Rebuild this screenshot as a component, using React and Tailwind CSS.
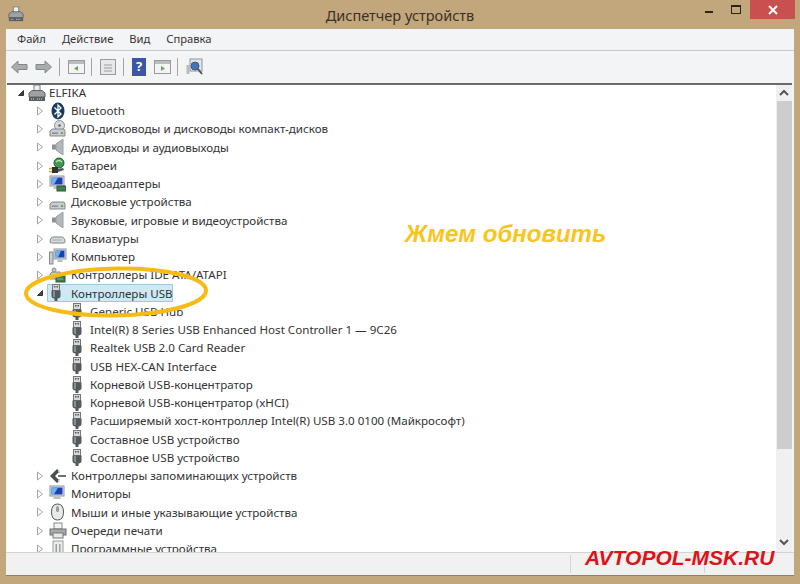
import React from 'react';

const Expander = ({ open }) => (
  <svg width="10" height="10" viewBox="0 0 10 10" className="shrink-0">
    {open ? (
      <path d="M7.5 2.5 V7.5 H2.5 Z" fill="#444" stroke="#333" />
    ) : (
      <path d="M2.5 1 L7.5 5 L2.5 9 Z" fill="#fff" stroke="#a6a6a6" />
    )}
  </svg>
);

const Usb = () => (
  <svg width="16" height="18" viewBox="0 0 16 18" className="shrink-0">
    <rect x="4.5" y="0.5" width="7" height="6" fill="#d8d8d8" stroke="#777" />
    <rect x="6" y="2" width="1.5" height="1.5" fill="#555" />
    <rect x="8.5" y="2" width="1.5" height="1.5" fill="#555" />
    <path d="M3.5 6.5 H12.5 V12 Q12.5 14 9.5 14.5 V17 H6.5 V14.5 Q3.5 14 3.5 12 Z" fill="#55585c" />
    <rect x="5" y="7" width="2" height="6" fill="#8b8e92" />
  </svg>
);

const Bluetooth = () => (
  <svg width="16" height="18" viewBox="0 0 16 18">
    <ellipse cx="8" cy="9" rx="6.5" ry="8.5" fill="#1a3a5e" />
    <path d="M4.5 5.5 L11 12 L8 15 V3 L11 6 L4.5 12.5" fill="none" stroke="#fff" strokeWidth="1.3" />
  </svg>
);

const Drive = ({ disc }) => (
  <svg width="17" height="18" viewBox="0 0 17 18">
    {disc && <circle cx="10.5" cy="5.5" r="5" fill="#d6d9dc" stroke="#8a8f94" />}
    {disc && <circle cx="10.5" cy="5.5" r="1.3" fill="#666" />}
    <path d="M1 11 L3 9 H15 L16 11 V16 H1 Z" fill="#c9ccce" stroke="#84888c" />
    <rect x="3" y="12.5" width="6" height="1.5" fill="#8a8d90" />
    <rect x="12" y="12" width="2" height="2" fill="#6aa84f" />
  </svg>
);

const Speaker = () => (
  <svg width="16" height="18" viewBox="0 0 16 18">
    <path d="M2 6.5 H6 V11.5 H2 Z" fill="#8c9093" />
    <path d="M6 6 L13 1 V17 L6 12 Z" fill="#b4b8bb" stroke="#9a9ea1" />
  </svg>
);

const Battery = () => (
  <svg width="18" height="18" viewBox="0 0 18 18">
    <circle cx="10" cy="6" r="5" fill="#3f9b4f" stroke="#1f5e2c" />
    <path d="M7 5 Q10 2 13 5" fill="none" stroke="#b6e4bd" strokeWidth="1.3" />
    <path d="M3 10 H9 V16 H3 Z" fill="#2f3338" />
    <path d="M9 12 L14 11 L15 13 L9 15 Z" fill="#555" />
    <path d="M0 11.5 H3 M0 14.5 H3" stroke="#caa52a" strokeWidth="1.3" />
  </svg>
);

const Monitor = ({ card }) => (
  <svg width="17" height="18" viewBox="0 0 17 18">
    <rect x="1" y="1" width="14" height="10" fill="#dfe3e6" stroke="#8f9599" />
    <rect x="2.5" y="2.5" width="11" height="7" fill="#1c3fb5" />
    <path d="M2.5 2.5 H9 L5 9.5 H2.5 Z" fill="#6fb2ea" />
    <path d="M5 11.5 H11 L12 14 H4 Z" fill="#bcc0c3" />
    {card && <rect x="8" y="11" width="9" height="5" fill="#3f7f4a" stroke="#2b5b34" />}
  </svg>
);

const Keyboard = () => (
  <svg width="17" height="18" viewBox="0 0 17 18">
    <path d="M1 12 Q1 7 5 7 H12 Q16 7 16 12 Q16 13 14 13 H3 Q1 13 1 12 Z" fill="#d9dbdd" stroke="#7f8386" />
    <path d="M3.5 10 H13.5" stroke="#9da1a4" strokeWidth="1.5" strokeDasharray="1.2 0.8" />
  </svg>
);

const Computer = () => (
  <svg width="18" height="18" viewBox="0 0 18 18">
    <rect x="0.5" y="4" width="3.5" height="12" fill="#c9cccf" stroke="#85898c" />
    <rect x="5" y="1" width="12" height="10" fill="#dfe3e6" stroke="#8f9599" />
    <rect x="6.5" y="2.5" width="9" height="7" fill="#1c3fb5" />
    <path d="M6.5 2.5 H12 L9 9.5 H6.5 Z" fill="#6fb2ea" />
    <path d="M9 11.5 H13 L14 14 H8 Z" fill="#bcc0c3" />
  </svg>
);

const Ide = () => (
  <svg width="17" height="18" viewBox="0 0 17 18">
    <path d="M1 8 L3 6 H11 L12 8 V13 H1 Z" fill="#c9ccce" stroke="#84888c" />
    <circle cx="5" cy="4" r="2" fill="#bfc3c6" stroke="#8a8f94" />
    <rect x="7" y="10" width="9" height="6" fill="#3f7f4a" stroke="#2b5b34" />
    <path d="M8.5 13 H14.5" stroke="#cfe8d4" strokeDasharray="1 1" />
  </svg>
);

const Storage = () => (
  <svg width="18" height="18" viewBox="0 0 18 18">
    <path d="M1 9 L8 2 L10.5 4.5 L6 9 L10.5 13.5 L8 16 Z" fill="#4a4e52" />
    <path d="M9 8 H17 V10 H9 Z" fill="#6d7175" />
    <path d="M9 4 L11 6 M9 14 L11 12" stroke="#ccc" />
  </svg>
);

const Mouse = () => (
  <svg width="15" height="18" viewBox="0 0 15 18">
    <path d="M7.5 1 Q13.5 1 13.5 9 Q13.5 17 7.5 17 Q1.5 17 1.5 9 Q1.5 1 7.5 1 Z" fill="#e7e9ea" stroke="#55595c" />
    <rect x="6" y="3" width="3" height="6" rx="1.5" fill="#9a9ea1" />
  </svg>
);

const Printer = () => (
  <svg width="18" height="18" viewBox="0 0 18 18">
    <rect x="5" y="1" width="8" height="6" fill="#f3f3f3" stroke="#888" />
    <rect x="1" y="7" width="16" height="6" fill="#a6aaad" stroke="#6b6f72" />
    <rect x="4" y="11" width="10" height="5" fill="#e8e8e8" stroke="#777" />
  </svg>
);

const Software = () => (
  <svg width="16" height="18" viewBox="0 0 16 18">
    <rect x="3" y="1" width="10" height="16" fill="#eceded" stroke="#9a9ea1" />
    <rect x="5.5" y="4" width="1.5" height="10" fill="#9a9ea1" />
    <rect x="9" y="4" width="1.5" height="10" fill="#9a9ea1" />
  </svg>
);

const Root = ({ size = 18 }) => (
  <svg width={size} height={size} viewBox="0 0 18 18">
    <rect x="6" y="1" width="6" height="7" fill="#f1f1f1" stroke="#7c8084" />
    <path d="M1 9 L4 6.5 H14 L17 9 V13 H1 Z" fill="#9ea2a5" stroke="#5f6366" />
    <rect x="1" y="13" width="16" height="4" fill="#5a5e62" />
    <path d="M3 15 H7 M9 15 H15" stroke="#d6d8da" strokeDasharray="1 1" />
  </svg>
);

const topBefore = [
  [Bluetooth, 'Bluetooth'],
  [() => <Drive disc />, 'DVD-дисководы и дисководы компакт-дисков'],
  [Speaker, 'Аудиовходы и аудиовыходы'],
  [Battery, 'Батареи'],
  [() => <Monitor card />, 'Видеоадаптеры'],
  [Drive, 'Дисковые устройства'],
  [Speaker, 'Звуковые, игровые и видеоустройства'],
  [Keyboard, 'Клавиатуры'],
  [Computer, 'Компьютер'],
  [Ide, 'Контроллеры IDE ATA/ATAPI'],
];

const usbDevices = [
  'Generic USB Hub',
  'Intel(R) 8 Series USB Enhanced Host Controller 1 — 9C26',
  'Realtek USB 2.0 Card Reader',
  'USB HEX-CAN Interface',
  'Корневой USB-концентратор',
  'Корневой USB-концентратор (xHCI)',
  'Расширяемый хост-контроллер Intel(R) USB 3.0 0100 (Майкрософт)',
  'Составное USB устройство',
  'Составное USB устройство',
];

const topAfter = [
  [Storage, 'Контроллеры запоминающих устройств'],
  [Monitor, 'Мониторы'],
  [Mouse, 'Мыши и иные указывающие устройства'],
  [Printer, 'Очереди печати'],
  [Software, 'Программные устройства'],
];

const Row = ({ Icon, label }) => (
  <div className="h-[18.25px] flex items-center pl-[28px]">
    <Expander />
    <span className="w-[21px] flex justify-center ml-[2px]"><Icon /></span>
    <span className="ml-[3px] whitespace-nowrap">{label}</span>
  </div>
);

const ToolIcon = ({ children }) => (
  <svg width="17" height="18" viewBox="0 0 17 18" className="shrink-0">{children}</svg>
);

const Sep = () => <div className="w-px h-[18px] bg-[#a5a5a5] shrink-0" />;

const WinDoc = ({ mark }) => (
  <ToolIcon>
    <rect x="0.5" y="2.5" width="16" height="13" fill="#f4f4f4" stroke="#9a9a9a" />
    <rect x="1" y="3" width="15" height="3" fill="#bdbdbd" />
    {mark}
  </ToolIcon>
);

export default function App() {
  return (
    <div className="w-[800px] h-[584px] relative overflow-hidden bg-[#c2a67c] flex flex-col font-['Noto_Sans','Open_Sans',sans-serif] text-[11.6px] text-[#333]">
      {/* title bar */}
      <div className="h-[29px] shrink-0 flex items-center relative">
        <span className="ml-[8px] -mt-[2px]"><Root size={16} /></span>
        <span className="absolute left-0 right-0 top-[5px] text-center text-[14.5px] text-[#3a3226]">Диспетчер устройств</span>
        <div className="ml-auto flex items-start self-start mr-[5px]">
          <div className="w-[8px] h-[2px] bg-[#2a2418] mt-[11px] mr-[18px]" />
          <div className="w-[10px] h-[9px] border border-[#2a2418] border-t-2 mt-[5px] mr-[9px]" />
          <div className="w-[45px] h-[19px] bg-[#c9504f] flex items-center justify-center text-white">
            <svg width="10" height="10" viewBox="0 0 10 10">
              <path d="M1 1 L9 9 M9 1 L1 9" stroke="#fff" strokeWidth="2" />
            </svg>
          </div>
        </div>
      </div>

      {/* window */}
      <div className="mx-[6px] h-[547px] shrink-0 flex flex-col bg-[#f3f4f6] border-b border-[#8f7f66]">
        <div className="h-[22px] shrink-0 flex items-center pl-[11px] gap-[16px] border-b border-[#c8c9cb] text-[11.2px]">
          <span>Файл</span>
          <span>Действие</span>
          <span>Вид</span>
          <span>Справка</span>
        </div>
        <div className="h-[32px] shrink-0 flex items-center pl-[5px] bg-[#f3f4f6]">
          <div className="flex items-center gap-[7px]">
            <svg width="17" height="14" viewBox="0 0 17 14"><path d="M0.5 7 L7 1 V4.5 H16 V9.5 H7 V13 Z" fill="#a9acac" stroke="#848787" /></svg>
            <svg width="17" height="14" viewBox="0 0 17 14"><path d="M16.5 7 L10 1 V4.5 H1 V9.5 H10 V13 Z" fill="#a9acac" stroke="#848787" /></svg>
            <Sep />
          </div>
          <div className="flex items-center gap-[6px] ml-[8px]">
            <WinDoc mark={<path d="M6 10.5 L10 8 V13 Z" fill="#6aa84f" />} />
            <Sep />
            <span className="ml-[2px] flex"><ToolIcon>
              <rect x="0.5" y="1.5" width="15" height="15" fill="#e6e9ea" stroke="#9a9a9a" />
              <path d="M4 7 H12 M4 10 H12 M4 13 H12" stroke="#9a9a9a" />
            </ToolIcon></span>
            <Sep />
            <span className="ml-[2px] w-[14px] h-[18px] bg-[#3d55a8] text-white text-[13px] font-bold flex items-center justify-center">?</span>
            <span className="ml-[2px] flex"><WinDoc mark={<path d="M7 8 L11 10.5 L7 13 Z" fill="#6aa84f" />} /></span>
            <Sep />
            <span className="ml-[2px] flex"><ToolIcon>
              <rect x="4" y="1" width="12" height="12" fill="#dfe6f0" stroke="#8c95a3" />
              <circle cx="9" cy="8" r="4" fill="#3f76c4" stroke="#555" />
              <path d="M12 11 L16 16" stroke="#555" strokeWidth="2" />
              <rect x="0.5" y="7" width="3" height="9" fill="#b8bcc0" />
            </ToolIcon></span>
          </div>
        </div>

        {/* tree + scrollbar */}
        <div className="h-[469px] shrink-0 ml-px mr-[2px] flex bg-white border-t-2 border-[#6a6a6a] overflow-hidden">
          <div className="flex-1 -mt-[1.5px] overflow-hidden">
            <div className="h-[18.25px] flex items-center pl-[9px]">
              <Expander open />
              <span className="ml-[2px]"><Root /></span>
              <span className="ml-[3px]">ELFIKA</span>
            </div>
            {topBefore.map(([Icon, label], i) => <Row key={i} Icon={Icon} label={label} />)}
            <div className="h-[18.25px] flex items-center pl-[28px]">
              <Expander open />
              <div className="flex items-center h-[18px] w-[126px] ml-[2px] bg-[#cfe8f3] border border-[#9ccbe0] whitespace-nowrap">
                <Usb />
                <span className="ml-[7px]">Контроллеры USB</span>
              </div>
            </div>
            {usbDevices.map((label, i) => (
              <div key={i} className="h-[18.25px] flex items-center pl-[62px]">
                <Usb />
                <span className="ml-[5px] whitespace-nowrap">{label}</span>
              </div>
            ))}
            {topAfter.map(([Icon, label], i) => <Row key={i} Icon={Icon} label={label} />)}
          </div>
          <div className="w-[16px] shrink-0 bg-[#f0f0f0] flex flex-col items-center">
            <svg width="16" height="16" viewBox="0 0 16 16" className="shrink-0"><path d="M4 10 L8 6 L12 10" fill="none" stroke="#555" strokeWidth="2" /></svg>
            <div className="w-[15px] h-[348px] bg-[#cdcdcd] shrink-0" />
            <svg width="16" height="16" viewBox="0 0 16 16" className="mt-auto mb-[2px] shrink-0"><path d="M4 6 L8 10 L12 6" fill="none" stroke="#555" strokeWidth="2" /></svg>
          </div>
        </div>

        {/* status bar */}
        <div className="flex-1 flex border-t border-[#d2d2d2] bg-[#f1f1f1]">
          <div className="w-[565px] border-r border-[#d5d5d5] my-[2px]" />
          <div className="w-[134px] border-r border-[#d5d5d5] my-[2px]" />
        </div>
      </div>

      {/* annotations on the picture */}
      <svg width="800" height="584" viewBox="0 0 800 584" className="absolute left-0 top-0 pointer-events-none">
        <ellipse cx="116" cy="292" rx="90" ry="23.5" fill="none" stroke="#f7bc14" strokeWidth="4" transform="rotate(-1 116 292)" />
      </svg>
      <span className="absolute left-[405px] top-[220px] text-[24px] leading-[28px] italic font-bold text-[#f9c51d] font-['Liberation_Sans',sans-serif] whitespace-nowrap">Жмем обновить</span>
      <span className="absolute left-[585px] top-[542px] text-[21px] leading-[32px] italic font-bold text-[#dc1417] font-['Liberation_Sans',sans-serif] whitespace-nowrap">AVTOPOL-MSK.RU</span>
    </div>
  );
}
